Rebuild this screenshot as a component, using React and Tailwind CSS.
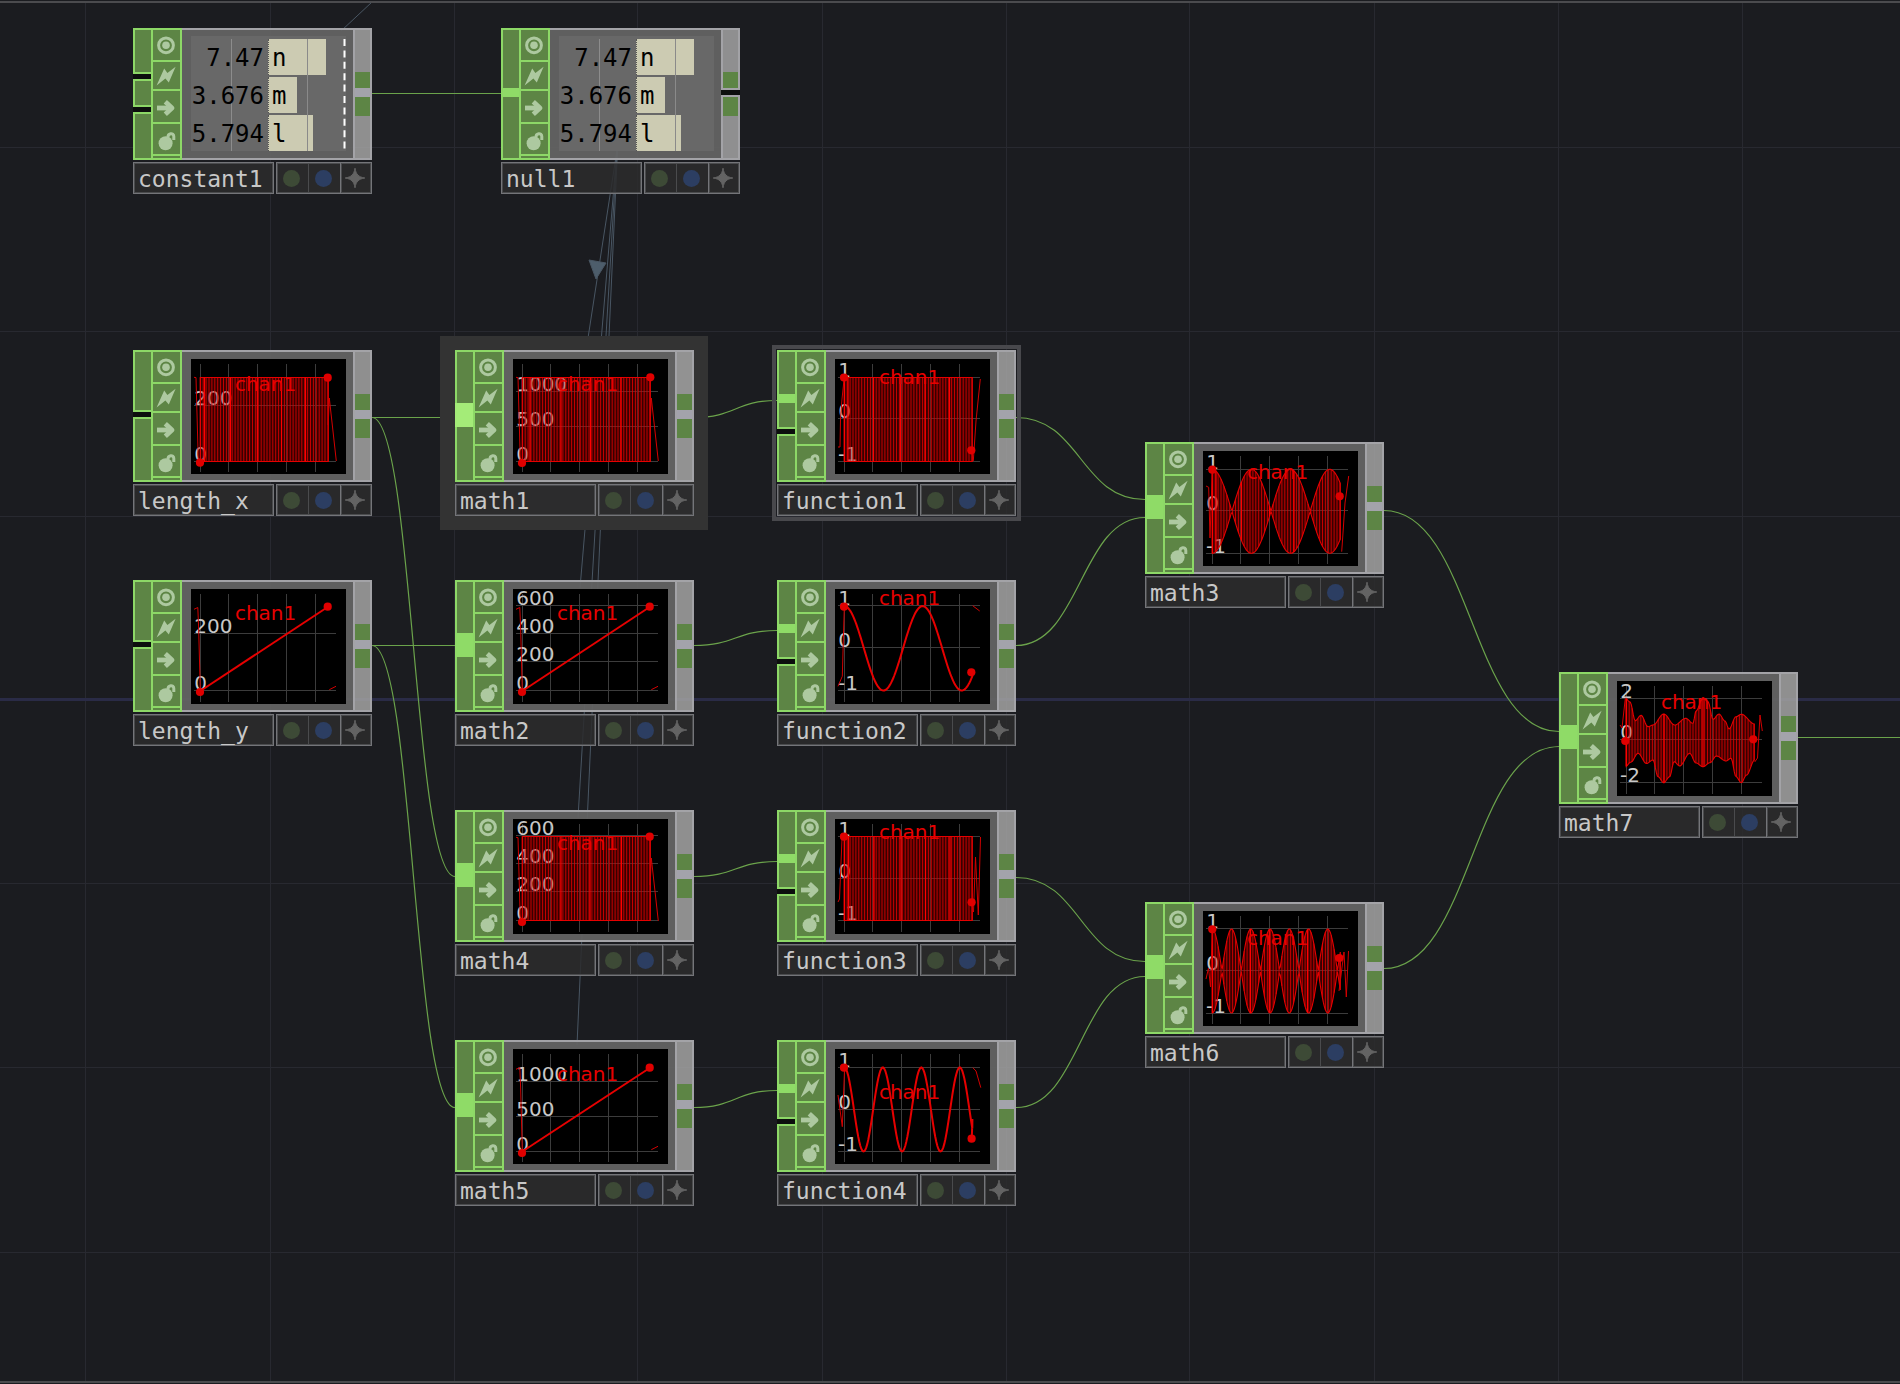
import React from "react";

const V_LINES = [85, 270, 454, 637, 822, 1006, 1189, 1374, 1558, 1742];
const H_LINES = [147, 331, 516, 883, 1067, 1252];

// input connector columns, top to bottom; they add up to the 132px body
const INPUTS = {
  three: [["seg", 46], ["gap", 5], ["seg", 28], ["gap", 5], ["seg", 48]],
  two: [["seg", 62], ["gap", 5], ["seg", 65]],
  thin: [["segTop", 60], ["plug", 9], ["segBottom", 63]],
  wide: [["segTop", 53], ["plug", 24], ["segBottom", 55]],
  func: [["segTop", 44], ["plug", 9], ["segBottom", 26], ["gap", 5], ["seg", 48]],
};

const PART_CLASS = {
  seg: "border-2 border-r-0 border-[#8dd867] bg-[#5d8545]",
  segTop: "border-2 border-r-0 border-b-0 border-[#8dd867] bg-[#5d8545]",
  segBottom: "border-2 border-r-0 border-t-0 border-[#8dd867] bg-[#5d8545]",
  plug: "bg-[#8fdb67]",
  gap: "bg-[#0d0f0e]",
};

const X0 = 9.3;
const X1 = 137.5;

const cosAt = (period) => (x) => Math.cos((2 * Math.PI * (x - X0)) / period);

function line(points) {
  return points.map((p) => p.join(",")).join(" ");
}

function sample(fn, step = 1) {
  const pts = [];
  for (let x = X0; x <= X1; x += step) pts.push([x.toFixed(1), fn(x).toFixed(1)]);
  return pts;
}

function interp(table) {
  return (x) => {
    for (let i = 1; i < table.length; i++) {
      const [ax, ay] = table[i - 1];
      const [bx, by] = table[i];
      if (x <= bx) {
        const t = Math.max(0, (x - ax) / (bx - ax));
        return ay + (by - ay) * (1 - Math.cos(Math.PI * t)) * 0.5;
      }
    }
    return table[table.length - 1][1];
  };
}

const flatTop = () => 18.5;
const flatBottom = () => 102.5;

const mixUpper = interp([
  [8.3, 17.3], [13, 21], [18.3, 39.7], [24, 34.3], [31, 45.7], [36, 44], [46.7, 33], [57.7, 44],
  [68.7, 37.3], [76, 42.3], [79, 30], [86, 16.7], [91, 20.7], [96, 38.3], [102, 33], [108, 40],
  [112, 48], [119, 35.7], [124.3, 33.3], [137.7, 43],
]);
const mixLower = interp([
  [8.3, 85.7], [14, 81], [21, 72.3], [29.5, 82.5], [36, 79], [41, 95.7], [46.7, 101.7], [52.7, 95.7],
  [57, 80.7], [62.7, 85], [72.7, 72.3], [79, 82], [86, 85.7], [93, 81.7], [99.5, 75], [109, 80],
  [114, 77.3], [119, 95.7], [124.3, 101.7], [129.5, 94], [137.7, 79],
]);

const RAMP = { start: [[3, 20.3], [6.8, 18.5], [7.6, 38], [9.3, 102]], end: [[138.3, 100.7], [145, 97.3]] };
const SAW = { start: [[3, 18.3], [5, 18.6], [7.3, 102]], end: [[137, 19], [137.2, 66], [138.3, 39], [145.3, 102]] };

const CHARTS = {
  length_x: { rows: [["200", 46.5], ["0", 102.5]], title: 32, kind: "dense", upper: flatTop, lower: flatBottom, ...SAW, dots: [[9, 103.7], [136.7, 18.7]], hot: [13.5, 39.5, 66.3, 90.5, 114.5] },
  length_y: { rows: [["200", 44.5], ["0", 101.5]], title: 31, kind: "line", path: [[9.3, 102], [136.7, 18]], ...RAMP, dots: [[9, 103], [136.7, 17.7]] },
  math1: { rows: [["1000", 32.5], ["500", 67.5], ["0", 102.5]], title: 32, kind: "dense", upper: flatTop, lower: flatBottom, ...SAW, dots: [[9, 104], [137.3, 18.3]], hot: [17, 48, 77.5, 108] },
  math2: { rows: [["600", 16.5], ["400", 44.5], ["200", 72.5], ["0", 101.5]], title: 31, kind: "line", path: [[9.3, 102], [136.7, 18]], ...RAMP, dots: [[9, 103], [136.7, 17.7]] },
  math4: { rows: [["600", 16.5], ["400", 44.5], ["200", 72.5], ["0", 101.5]], title: 31, kind: "dense", upper: () => 17.5, lower: () => 101.5, ...SAW, dots: [[9, 103], [136.7, 17.7]], hot: [48, 77, 108.5] },
  math5: { rows: [["1000", 32.5], ["500", 67.5], ["0", 102.5]], title: 32, kind: "line", path: [[9.3, 102.5], [136.7, 19]], ...RAMP, dots: [[9, 104], [136.7, 18.7]] },
  function1: { rows: [["1", 18.5], ["0", 59.5], ["-1", 102.5]], title: 25, kind: "dense", upper: flatTop, lower: flatBottom, start: [[3, 88], [5, 88], [5.5, 60], [7, 40], [9.3, 18]], end: [[138.3, 102], [141, 62], [145.3, 20]], dots: [[9, 18.5], [136.3, 91.3]], hot: [9.5, 13, 38.5, 65.5, 90, 114.5] },
  function2: { rows: [["1", 16.5], ["0", 58.5], ["-1", 101.5]], title: 16, kind: "line", path: [...sample((x) => 59.3 - 42.2 * cosAt(78.3)(x)), [136.6, 83]], start: [[3, 97.3], [7.3, 87.3], [9.3, 18]], end: [[137.7, 16.7], [144.7, 22]], dots: [[9, 17.7], [136.3, 83.3]] },
  function3: { rows: [["1", 17.5], ["0", 59.5], ["-1", 101.5]], title: 20, kind: "dense", upper: () => 17.5, lower: () => 101.5, start: [[3, 83], [4.5, 80], [7, 20], [9.3, 18]], end: [[138.5, 93], [140.5, 38], [143.3, 96], [145.5, 18]], dots: [[9, 17.7], [136.6, 83.3]], hot: [9.5, 13.5, 39, 66, 90.5, 115] },
  function4: { rows: [["1", 18.5], ["0", 60.5], ["-1", 102.5]], title: 49.5, kind: "line", path: [...sample((x) => 60.5 - 42 * cosAt(38.5)(x)), [137.4, 70], [136.8, 89]], start: [[3, 46], [7.3, 77.7], [9.6, 18.7]], end: [[137.8, 18.7], [141, 22], [145.8, 38.7]], dots: [[9, 18.7], [136.6, 89.7]] },
  math3: { rows: [["1", 18.5], ["0", 59.5], ["-1", 102.5]], title: 28.3, kind: "dense", upper: (x) => 60.3 - 42 * Math.abs(cosAt(78.3)(x)), lower: (x) => 60.3 + 42 * Math.abs(cosAt(78.3)(x)), start: [[3, 35], [5.7, 36.3], [7, 87], [9.3, 18.7]], end: [[138.7, 100.7], [140, 82], [142, 52], [145.7, 25]], dots: [[9.3, 18.7], [136.7, 45.3]], hot: [9.5, 13, 38.5, 66.5, 91] },
  math6: { rows: [["1", 17.5], ["0", 59.5], ["-1", 102.5]], title: 34.3, kind: "dense", upper: (x) => 60 - 42 * Math.abs(cosAt(38.5)(x)), lower: (x) => 60 + 42 * Math.abs(cosAt(38.5)(x)), start: [[3, 68], [5.5, 57], [7.5, 76], [9.3, 18.7]], end: [[136, 80], [141, 41], [143.3, 86], [145.5, 40]], dots: [[9.3, 18.3], [136.3, 47]], hot: [9.5, 47.5, 66.3, 104.5] },
  math7: { rows: [["2", 17.5], ["0", 58.5], ["-2", 101.5]], title: 27.5, kind: "dense", upper: mixUpper, lower: mixLower, start: [[3, 44], [5, 47], [8.3, 17.3]], end: [[137.7, 81], [140.5, 77], [143, 34], [145.3, 50]], dots: [[8.3, 60], [136.3, 58.3]], hot: [9.3, 47, 86] },
};

function Chart({ name }) {
  const c = CHARTS[name];
  const strokes = [];
  if (c.kind === "dense") {
    for (let x = X0; x <= X1; x += 2.9) strokes.push(x);
  }
  return (
    <svg width="155" height="115" viewBox="0 0 155 115" className="block bg-black font-['DejaVu_Sans'] text-[20px]">
      {[9.5, 37.5, 66.5, 95.5, 124.5].map((x) => (
        <path key={x} d={`M${x} 5V113`} stroke="#3c3c3c" />
      ))}
      {c.rows.map(([t, y]) => (
        <path key={t} d={`M3 ${y}H145`} stroke="#3c3c3c" />
      ))}
      {c.rows.map(([t, y]) => (
        <text key={t} x={t[0] === "-" ? 3 : 3.2} y={y - 0.5} fill="#c8c8c8">{t}</text>
      ))}
      {c.kind === "dense" ? (
        <g fill="none" stroke="#e60000">
          <polygon
            points={line([...sample(c.upper), ...sample(c.lower).reverse()])}
            fill="#a00000"
            fillOpacity="0.34"
            strokeWidth="1.1"
          />
          {strokes.map((x) => (
            <path key={x} d={`M${x} ${c.upper(x)}V${c.lower(x)}`} strokeWidth="0.95" strokeOpacity="0.85" />
          ))}
          {c.hot.map((x) => (
            <path key={x} d={`M${x} ${c.upper(x)}V${c.lower(x)}`} stroke="#ff0000" strokeWidth="1.2" />
          ))}
        </g>
      ) : (
        <polyline points={line(c.path)} fill="none" stroke="#e60000" strokeWidth="2" />
      )}
      <polyline points={line(c.start)} fill="none" stroke="#d40000" />
      <polyline points={line(c.end)} fill="none" stroke="#d40000" />
      <text x="74.6" y={c.title} textAnchor="middle" fill="#e80000">chan1</text>
      {c.dots.map(([x, y]) => (
        <circle key={x} cx={x} cy={y} r="4.1" fill="#e00000" />
      ))}
    </svg>
  );
}

const VALUES = [
  ["7.47", "n", "w-[58px]"],
  ["3.676", "m", "w-[29px]"],
  ["5.794", "l", "w-[45px]"],
];

function ValueBars({ dashed }) {
  return (
    <div className="relative flex h-[115px] w-[155px] flex-col gap-[2px] bg-[#686868] pt-[3px] font-['DejaVu_Sans_Mono'] text-[24px] leading-[38px] text-black">
      <svg width="155" height="115" className="absolute top-0 left-0">
        <path d="M40.5 3V115" stroke="#8c8c8c" />
      </svg>
      {VALUES.map(([v, ch, w]) => (
        <div key={ch} className="relative flex h-[36px]">
          <span className="w-[77px] pr-[4px] text-right">{v}</span>
          <span className={`${w} border-l border-dotted border-[#555] bg-[#cccbb2] pl-[3px]`}>{ch}</span>
        </div>
      ))}
      <svg width="155" height="115" className="absolute top-0 left-0">
        <path d="M116.5 3V115" stroke="#8a8a8a" />
        {dashed && <path d="M153.5 3V115" stroke="#fff" strokeWidth="2" strokeDasharray="7 4.4" />}
      </svg>
    </div>
  );
}

function FlagColumn() {
  const cell = "flex items-center justify-center border-b-2 border-[#8dd867] pr-[2px]";
  return (
    <div className="flex w-[31px] flex-col border-2 border-[#8dd867] bg-[#5d8545]">
      <div className={`${cell} h-[32px]`}>
        <svg width="20" height="20" viewBox="0 0 20 20">
          <circle cx="10" cy="10.3" r="7.4" fill="none" stroke="#adc9a0" strokeWidth="3" />
          <circle cx="10" cy="10.3" r="3.8" fill="#adc9a0" />
        </svg>
      </div>
      <div className={`${cell} h-[29px] pt-px`}>
        <svg width="20" height="20" viewBox="0 0 20 20" fill="#adc9a0">
          <path d="M19.6 0.8 11.4 6.9 8.2 2.6 0.6 19.4 9.4 12.4 12.8 16.6Z" />
        </svg>
      </div>
      <div className={`${cell} h-[33px] pt-[3px]`}>
        <svg width="20" height="20" viewBox="0 0 20 20" fill="none" stroke="#adc9a0">
          <path d="M1 10H16" strokeWidth="4.8" />
          <path d="M9.3 3.8 16 10 9.3 16.2" strokeWidth="4.8" strokeLinejoin="round" />
        </svg>
      </div>
      <div className={`${cell} h-[32px] pt-[3px]`}>
        <svg width="20" height="20" viewBox="0 0 20 20">
          <circle cx="9.6" cy="12.3" r="7" fill="#adc9a0" />
          <path d="M12 7C11.4 1.8 17.8 1.2 17.8 5.6V9" fill="none" stroke="#adc9a0" strokeWidth="3" />
        </svg>
      </div>
    </div>
  );
}

function OutputBar({ split }) {
  if (split) {
    return (
      <div className="flex w-[19px] flex-col justify-between">
        <div className="flex h-[62px] flex-col justify-end border-2 border-[#a3a3a7] bg-[#8f8f90]">
          <div className="h-[16px] bg-[#5d8545]" />
        </div>
        <div className="h-[5px] bg-[#0d0f0e]" />
        <div className="h-[65px] border-2 border-[#a3a3a7] bg-[#8f8f90]">
          <div className="h-[19px] bg-[#5d8545]" />
        </div>
      </div>
    );
  }
  return (
    <div className="flex w-[19px] flex-col border-2 border-[#a3a3a7] bg-[#a3a3a3]/85">
      <div className="mt-[42px] h-[16px] bg-[#5d8545]" />
      <div className="h-[9px] bg-[#a3a3ab]" />
      <div className="h-[19px] bg-[#5d8545]" />
    </div>
  );
}

function OpNode({ name, x, y, input, values, split, current }) {
  const edge = "border-[#747579]";
  const soft = "shadow-[inset_0_0_0_1px_#4a4b4d]";
  return (
    <div className="absolute flex w-[239px] flex-col gap-[2px]" style={{ left: x, top: y }}>
      <div className="flex h-[132px]">
        <div className="flex w-[18px] flex-col">
          {INPUTS[input].map(([part, h], i) => (
            <div
              key={i}
              className={current && part === "plug" ? "bg-[#a4ec78]" : PART_CLASS[part]}
              style={{ height: h }}
            />
          ))}
        </div>
        <FlagColumn />
        <div className={`flex-1 border-y-2 border-[#a3a3a7] bg-[#636363]/95 pl-[9px] ${values ? "pt-[6px]" : "pt-[7px]"}`}>
          {values ? <ValueBars dashed={values === "dashed"} /> : <Chart name={name} />}
        </div>
        <OutputBar split={split} />
      </div>
      <div className="flex h-[32px] gap-[2px]">
        <div className={`w-[141px] border ${edge} ${soft} bg-[#2c2c2d]/85 pl-[4px] font-['DejaVu_Sans_Mono'] text-[23px] leading-[32px] text-[#c8c8c8]`}>
          {name}
        </div>
        <div className={`flex flex-1 border ${edge} ${soft} bg-[#2c2c2d]/85`}>
          <div className={`flex w-[32px] items-center justify-center border-r ${edge}`}>
            <div className="mt-px mr-[3px] size-[17px] rounded-full bg-[#3d4a36]" />
          </div>
          <div className={`flex w-[32px] items-center justify-center border-r ${edge} shadow-[1px_0_0_#4a4b4d,-1px_0_0_#4a4b4d]`}>
            <div className="mt-px mr-[3px] size-[17px] rounded-full bg-[#2c3e62]" />
          </div>
          <div className="flex flex-1 items-center justify-center">
            <svg width="20" height="20" viewBox="0 0 20 20" className="mr-[2px] mb-px">
              <path d="M10 0.2C11 6.5 13.5 9 19.8 10 13.5 11 11 13.5 10 19.8 9 13.5 6.5 11 0.2 10 6.5 9 9 6.5 10 0.2Z" fill="#636363" stroke="#636363" strokeWidth="1" />
            </svg>
          </div>
        </div>
      </div>
    </div>
  );
}

const NODES = [
  { name: "constant1", x: 133, y: 28, input: "three", values: "dashed" },
  { name: "null1", x: 501, y: 28, input: "thin", values: "plain", split: true },
  { name: "length_x", x: 133, y: 350, input: "two" },
  { name: "math1", x: 455, y: 350, input: "wide", current: true },
  { name: "function1", x: 777, y: 350, input: "func" },
  { name: "math3", x: 1145, y: 442, input: "wide" },
  { name: "length_y", x: 133, y: 580, input: "two" },
  { name: "math2", x: 455, y: 580, input: "wide" },
  { name: "function2", x: 777, y: 580, input: "func" },
  { name: "math7", x: 1559, y: 672, input: "wide" },
  { name: "math4", x: 455, y: 810, input: "wide" },
  { name: "function3", x: 777, y: 810, input: "func" },
  { name: "math6", x: 1145, y: 902, input: "wide" },
  { name: "math5", x: 455, y: 1040, input: "wide" },
  { name: "function4", x: 777, y: 1040, input: "func" },
];

// [x1, y1, x2, y2]
const WIRES = [
  [372, 93, 501, 93],
  [372, 417, 455, 417],
  [372, 417, 455, 876],
  [372, 645, 455, 645],
  [372, 645, 455, 1107],
  [694, 417, 777, 400],
  [694, 645, 777, 630],
  [694, 876, 777, 861],
  [694, 1107, 777, 1090],
  [1016, 417, 1145, 499],
  [1016, 645, 1145, 517],
  [1016, 877, 1145, 961],
  [1016, 1107, 1145, 976],
  [1384, 510, 1559, 731],
  [1384, 968, 1559, 746],
  [1798, 737, 1900, 737],
];

function Wires() {
  return (
    <svg width="1900" height="1384" className="absolute top-0 left-0" fill="none">
      {V_LINES.map((x) => (
        <path key={x} d={`M${x + 0.5} 3V1382`} stroke="#282930" />
      ))}
      {H_LINES.map((y) => (
        <path key={y} d={`M0 ${y + 0.5}H1900`} stroke="#282930" />
      ))}
      <path d="M0 699.5H1900" stroke="#2a2b46" strokeWidth="3" />
      <g stroke="#495663">
        <path d="M372 2 341 31" />
        <path d="M617 150 588 338" />
        <path d="M617 150 601.5 336 580 588" />
        <path d="M617 150 606 336 594.5 540 578 818" />
        <path d="M617.5 150 609 336 599 560 577 1045" />
        <path d="M589 260 606 263 596 279Z" fill="#4d5d6b" />
      </g>
      <g stroke="#6ba34b" strokeWidth="1.2">
        {WIRES.map(([x1, y1, x2, y2], i) => {
          const mx = (x1 + x2) / 2;
          return <path key={i} d={`M${x1} ${y1 + 0.5}C${mx} ${y1 + 0.5} ${mx} ${y2 + 0.5} ${x2} ${y2 + 0.5}`} />;
        })}
      </g>
    </svg>
  );
}

export default function App() {
  return (
    <div className="relative h-[1384px] w-[1900px] overflow-hidden bg-[#1b1c20]">
      <Wires />
      <div className="absolute top-[336px] left-[440px] h-[194px] w-[268px] bg-[#333333]" />
      <div className="absolute top-[345px] left-[772px] h-[176px] w-[249px] border-4 border-[#48484c]" />
      {NODES.map((n) => (
        <OpNode key={n.name} {...n} />
      ))}
      <div className="absolute top-px left-0 h-[2px] w-full bg-[#4b4b4e]" />
      <div className="absolute bottom-px left-0 h-[2px] w-full bg-[#4b4b4e]" />
    </div>
  );
}
